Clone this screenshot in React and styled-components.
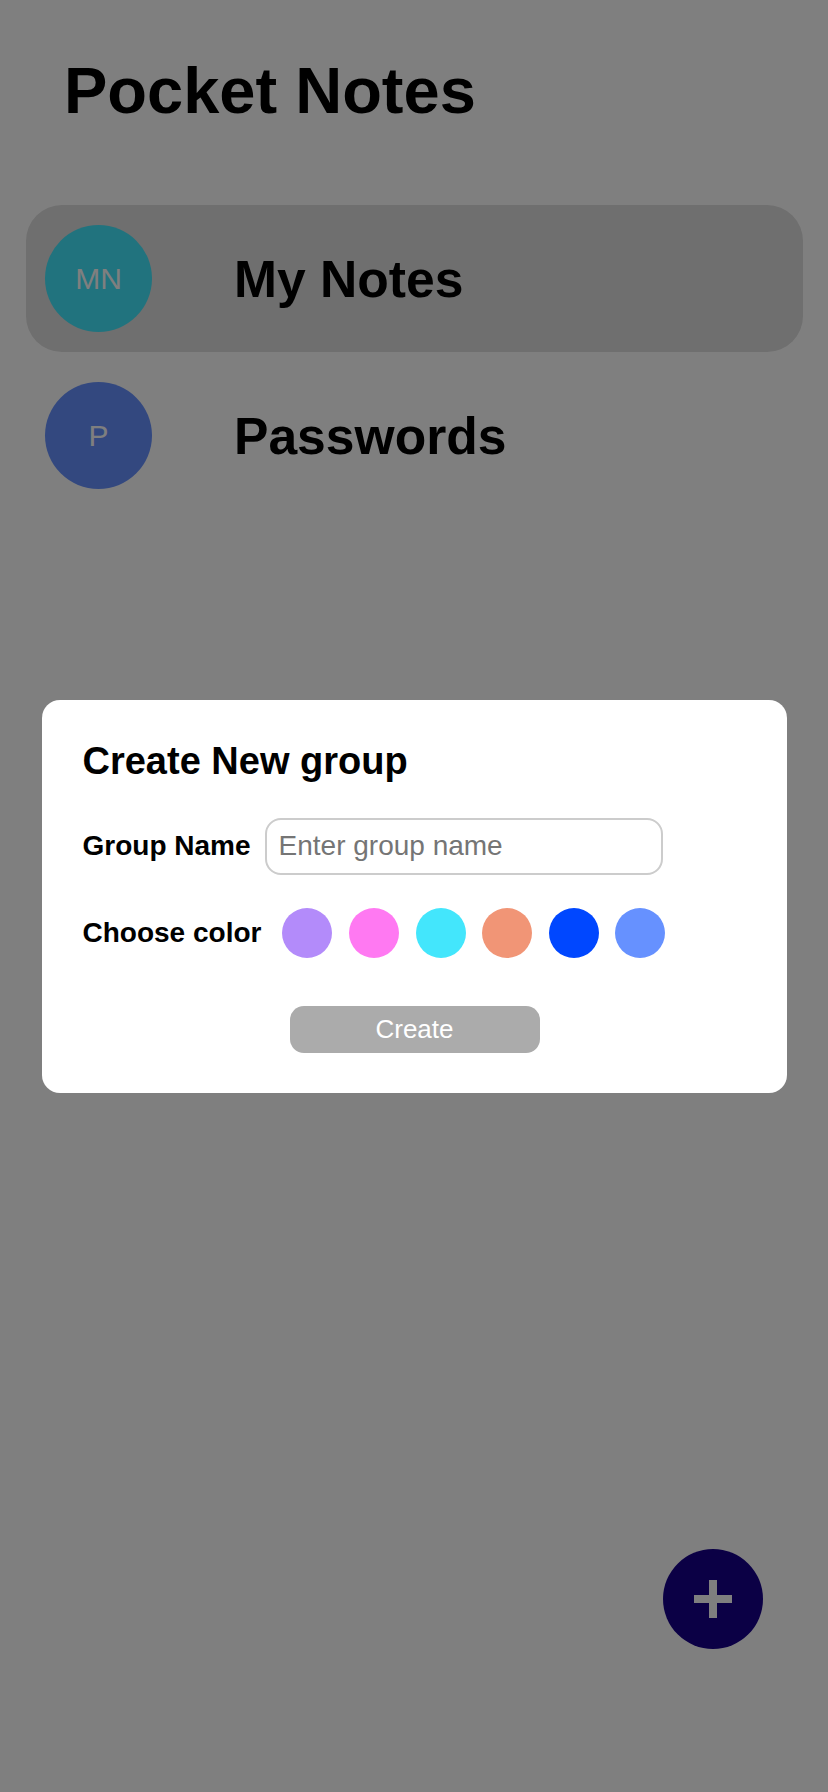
import React from "react";
import styled, { createGlobalStyle } from "styled-components";

const GlobalStyle = createGlobalStyle`
  html, body {
    margin: 0;
    padding: 0;
    background: #ffffff;
  }
  body {
    font-family: "Liberation Sans", Arial, sans-serif;
  }
  * { box-sizing: border-box; }
`;

const Page = styled.div`
  position: relative;
  width: 100%;
  min-height: 1792px;
  background: #ffffff;
`;

const Title = styled.h1`
  margin: 0;
  padding: 53px 0 0 64px;
  font-size: 65px;
  font-weight: 700;
  line-height: normal;
  color: #000;
`;

const GroupList = styled.ul`
  list-style: none;
  margin: 77px 0 0;
  padding: 0 25px 0 26px;
  display: flex;
  flex-direction: column;
  gap: 10px;
`;

const GroupRow = styled.li`
  display: flex;
  align-items: center;
  gap: 82px;
  height: 147px;
  padding: 0 19px;
  border-radius: 36px;
  background: ${(p) => (p.$active ? "#dedede" : "transparent")};
`;

const Avatar = styled.div`
  flex: none;
  width: 107px;
  height: 107px;
  border-radius: 50%;
  background: ${(p) => p.$color};
  color: #ffffff;
  font-size: 30px;
  display: flex;
  align-items: center;
  justify-content: center;
`;

const GroupName = styled.span`
  font-size: 51.6px;
  font-weight: 700;
  color: #000;
`;

const Fab = styled.button`
  position: absolute;
  left: 663px;
  top: 1549px;
  width: 100px;
  height: 100px;
  border: none;
  border-radius: 50%;
  background: #16008b;
  display: flex;
  align-items: center;
  justify-content: center;
  padding: 0;
  cursor: pointer;
`;

const Overlay = styled.div`
  position: fixed;
  inset: 0;
  background: rgba(0, 0, 0, 0.5);
  display: flex;
  align-items: center;
  justify-content: center;
`;

const Modal = styled.div`
  width: 745px;
  background: #ffffff;
  border-radius: 18px;
  padding: 40px 40px 40px 41px;
  display: flex;
  flex-direction: column;
`;

const ModalTitle = styled.h2`
  margin: 0 0 35px;
  font-size: 38px;
  font-weight: 700;
  line-height: normal;
  color: #000;
`;

const FieldRow = styled.div`
  display: flex;
  align-items: center;
  gap: ${(p) => p.$gap}px;
  margin-bottom: ${(p) => p.$mb || 0}px;
`;

const Label = styled.label`
  font-size: 28px;
  font-weight: 700;
  color: #000;
  white-space: nowrap;
`;

const NameInput = styled.input`
  width: 398px;
  height: 57px;
  border: 2px solid #cccccc;
  border-radius: 16px;
  padding: 0 12px;
  font-family: "Liberation Sans", Arial, sans-serif;
  font-size: 28px;
  color: #000;
  outline: none;
  &::placeholder {
    color: #757575;
  }
`;

const Swatches = styled.div`
  display: flex;
  gap: 16.6px;
`;

const Swatch = styled.button`
  width: 50px;
  height: 50px;
  border: none;
  border-radius: 50%;
  padding: 0;
  background: ${(p) => p.$color};
  cursor: pointer;
`;

const CreateButton = styled.button`
  align-self: center;
  margin-top: 48px;
  width: 250px;
  height: 47px;
  border: none;
  border-radius: 14px;
  background: #ababab;
  color: #ffffff;
  font-family: "Liberation Sans", Arial, sans-serif;
  font-size: 26px;
  cursor: pointer;
`;

const groups = [
  { initials: "MN", name: "My Notes", color: "#43E6FC", active: true },
  { initials: "P", name: "Passwords", color: "#6691FF", active: false },
];

const colors = ["#B38BFA", "#FF79F2", "#43E6FC", "#F19576", "#0047FF", "#6691FF"];

export default function App() {
  return (
    <>
      <GlobalStyle />
      <Page>
        <Title>Pocket Notes</Title>
        <GroupList>
          {groups.map((g) => (
            <GroupRow key={g.name} $active={g.active}>
              <Avatar $color={g.color}>{g.initials}</Avatar>
              <GroupName>{g.name}</GroupName>
            </GroupRow>
          ))}
        </GroupList>
        <Fab aria-label="Add group">
          <svg width="38" height="38" viewBox="0 0 38 38">
            <rect x="15" y="0" width="8" height="38" fill="#ffffff" />
            <rect x="0" y="15" width="38" height="8" fill="#ffffff" />
          </svg>
        </Fab>
        <Overlay>
          <Modal>
            <ModalTitle>Create New group</ModalTitle>
            <FieldRow $gap={14} $mb={33}>
              <Label htmlFor="group-name">Group Name</Label>
              <NameInput id="group-name" placeholder="Enter group name" />
            </FieldRow>
            <FieldRow $gap={21}>
              <Label>Choose color</Label>
              <Swatches>
                {colors.map((c) => (
                  <Swatch key={c} $color={c} aria-label={c} />
                ))}
              </Swatches>
            </FieldRow>
            <CreateButton>Create</CreateButton>
          </Modal>
        </Overlay>
      </Page>
    </>
  );
}
